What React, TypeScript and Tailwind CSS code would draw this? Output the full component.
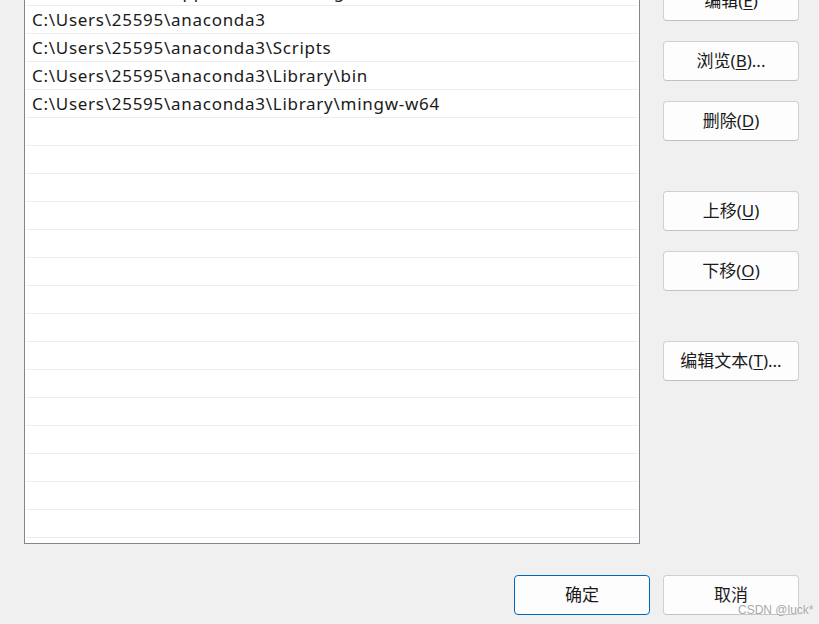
import React from 'react'

const font = '"Noto Sans", "Noto Sans CJK SC", sans-serif'

// 路径列表（第一行只露出一点）
const paths = [
  'C:\\Users\\25595\\AppData\\Local\\Programs\\Microsoft VS Code\\bin',
  'C:\\Users\\25595\\anaconda3',
  'C:\\Users\\25595\\anaconda3\\Scripts',
  'C:\\Users\\25595\\anaconda3\\Library\\bin',
  'C:\\Users\\25595\\anaconda3\\Library\\mingw-w64',
]

function Btn({ label, mnemonic, suffix = '', primary = false }: { label: string; mnemonic: string; suffix?: string; primary?: boolean }) {
  return (
    <button
      className={`h-[40px] w-[136px] rounded-[4px] border bg-[#fdfdfd] text-[17px] text-[#1a1a1a] flex items-center justify-center ${
        primary ? 'border-[#0067c0]' : 'border-[#d0d0d0] border-b-[#c2c2c2]'
      }`}
    >
      {label}
      {mnemonic && (
        <>
          (<span className="underline underline-offset-2">{mnemonic}</span>)
        </>
      )}
      {suffix}
    </button>
  )
}

export default function App() {
  const rows = Array.from({ length: 20 }, (_, i) => paths[i] ?? '')

  return (
    <div className="relative w-[819px] h-[624px] overflow-hidden bg-[#f0f0f0]" style={{ fontFamily: font }}>
      <div className="flex flex-col">
        {/* 上方：列表 + 右侧按钮 */}
        <div className="flex mt-[-23px] pl-[24px] pr-[20px]">
          <div className="w-[616px] h-[567px] border border-[#84868f] bg-white px-[1px]">
            {rows.map((p, i) => (
              <div key={i} className="h-[28px] border-b border-[#ececec] pl-[6px] pt-[2px] text-[17px] leading-[24px] tracking-[0.72px] text-[#1a1a1a] whitespace-nowrap overflow-hidden">
                {p}
              </div>
            ))}
          </div>
          <div className="ml-auto mt-[4px] flex flex-col">
            <Btn label="编辑" mnemonic="E" />
            <div className="mt-[20px]"><Btn label="浏览" mnemonic="B" suffix="..." /></div>
            <div className="mt-[20px]"><Btn label="删除" mnemonic="D" /></div>
            <div className="mt-[50px]"><Btn label="上移" mnemonic="U" /></div>
            <div className="mt-[20px]"><Btn label="下移" mnemonic="O" /></div>
            <div className="mt-[50px]"><Btn label="编辑文本" mnemonic="T" suffix="..." /></div>
          </div>
        </div>

        {/* 底部按钮 */}
        <div className="flex justify-end gap-[13px] mt-[31px] pr-[20px]">
          <Btn label="确定" mnemonic="" primary />
          <Btn label="取消" mnemonic="" />
        </div>
      </div>

      {/* 水印 */}
      <div className="absolute left-[738px] top-[601px] text-[12px] text-[#a8a8a8] [text-shadow:0_0_2px_#ffffff]" style={{ fontFamily: '"Liberation Sans", sans-serif' }}>
        CSDN @luck*
      </div>
    </div>
  )
}
